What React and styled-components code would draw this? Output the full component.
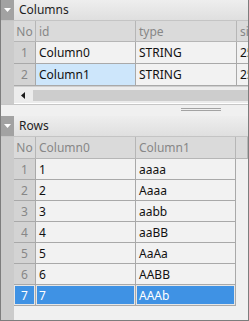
import React from "react";
import styled, { createGlobalStyle } from "styled-components";

const Global = createGlobalStyle`
  html, body { margin: 0; padding: 0; background: #f0f0f0; }
  body { font-family: "Segoe UI", "Noto Sans", "Liberation Sans", sans-serif; font-size: 12px; }
`;

const Frame = styled.div`
  width: 249px;
  height: 321px;
  box-sizing: border-box;
  border: 1px solid #7d7d7d;
  border-top: none;
  background: #f0f0f0;
  display: flex;
  flex-direction: column;
  overflow: hidden;
`;

const Panel = styled.section`
  display: flex;
  flex-direction: column;
  flex: ${(p) => (p.$grow ? "1 1 auto" : "0 0 auto")};
  min-height: 0;
`;

const TitleBar = styled.div`
  display: flex;
  height: 21px;
  box-sizing: border-box;
  border-bottom: 1px solid #c4c4c4;
  background: linear-gradient(#eeeeee, #dfdfdf);
  flex: none;
`;

const Toggle = styled.div`
  width: 13px;
  background: #a2a2a2;
  display: flex;
  align-items: center;
  justify-content: center;
  flex: none;
`;

const Title = styled.div`
  padding-left: 5px;
  line-height: 20px;
  color: #1e1e1e;
`;

const Body = styled.div`
  display: flex;
  flex: 1 1 auto;
  min-height: 0;
`;

const Gutter = styled.div`
  width: 13px;
  flex: none;
  background: #cbcbcb;
`;

const TableArea = styled.div`
  flex: 1 1 auto;
  min-width: 0;
  display: flex;
  flex-direction: column;
  overflow: hidden;
`;

const Grid = styled.div`
  display: grid;
  grid-template-columns: ${(p) => p.$cols};
  grid-template-rows: ${(p) => p.$head}px;
  grid-auto-rows: ${(p) => p.$row}px;
  width: max-content;
`;

const Row = styled.div`
  display: contents;
`;

const Cell = styled.div`
  box-sizing: border-box;
  border-right: 1px solid ${(p) => (p.$head ? "#b6b6b6" : "#a9a9a9")};
  border-bottom: 1px solid ${(p) => (p.$head ? "#b6b6b6" : "#a9a9a9")};
  background: ${(p) =>
    p.$sel ? "#3f92e4" : p.$soft ? "#cde6fb" : p.$head ? "#dadada" : p.$num ? "#d3d3d3" : "#f2f2f2"};
  color: ${(p) => (p.$sel ? "#ffffff" : p.$head || p.$num ? "#878787" : "#111111")};
  padding: 0 ${(p) => (p.$num ? "0" : "3px")};
  display: flex;
  align-items: center;
  justify-content: ${(p) => (p.$num ? "center" : "flex-start")};
  white-space: nowrap;
  overflow: hidden;
  ${(p) => (p.$sel ? "box-shadow: inset 0 0 0 1px #e6e6e6;" : "")}
`;

const HScroll = styled.div`
  display: flex;
  align-items: center;
  height: 18px;
  box-sizing: border-box;
  border-top: 1px solid #cfcfcf;
  border-bottom: 1px solid #ffffff;
  background: #ececec;
  flex: none;
`;

const ArrowBtn = styled.div`
  width: 18px;
  display: flex;
  align-items: center;
  justify-content: center;
  flex: none;
`;

const Thumb = styled.div`
  flex: 1 1 auto;
  height: 11px;
  margin-left: 1px;
  background: #cdcdcd;
`;

const Splitter = styled.div`
  height: 12px;
  flex: none;
  box-sizing: border-box;
  border-top: 1px solid #c6c6c6;
  display: flex;
  justify-content: flex-end;
  padding-right: 27px;
  padding-top: 3px;
`;

const Grip = styled.div`
  width: 40px;
  height: 3px;
  border-top: 1px solid #a3a3a3;
  border-bottom: 1px solid #a3a3a3;
  box-sizing: border-box;
`;

const Triangle = () => (
  <svg width="7" height="4" viewBox="0 0 7 4">
    <path d="M0 0 H7 L3.5 4 Z" fill="#ffffff" />
  </svg>
);

const LeftArrow = () => (
  <svg width="4" height="7" viewBox="0 0 4 7">
    <path d="M4 0 V7 L0 3.5 Z" fill="#1a1a1a" />
  </svg>
);

const columnsData = [
  { id: "Column0", type: "STRING", size: "255" },
  { id: "Column1", type: "STRING", size: "255", soft: true },
];

const rowsData = [
  ["1", "aaaa"],
  ["2", "Aaaa"],
  ["3", "aabb"],
  ["4", "aaBB"],
  ["5", "AaAa"],
  ["6", "AABB"],
  ["7", "AAAb"],
];

export default function App() {
  return (
    <>
      <Global />
      <Frame>
        <Panel>
          <TitleBar>
            <Toggle><Triangle /></Toggle>
            <Title>Columns</Title>
          </TitleBar>
          <Body>
            <Gutter />
            <TableArea>
              <Grid $cols="22px 100px 101px 60px" $head={21} $row={22}>
                <Row>
                  <Cell $head $num>No</Cell>
                  <Cell $head>id</Cell>
                  <Cell $head>type</Cell>
                  <Cell $head>size</Cell>
                </Row>
                {columnsData.map((c, i) => (
                  <Row key={c.id}>
                    <Cell $num>{i + 1}</Cell>
                    <Cell $soft={c.soft}>{c.id}</Cell>
                    <Cell>{c.type}</Cell>
                    <Cell>{c.size}</Cell>
                  </Row>
                ))}
              </Grid>
              <HScroll>
                <ArrowBtn><LeftArrow /></ArrowBtn>
                <Thumb />
              </HScroll>
            </TableArea>
          </Body>
        </Panel>
        <Splitter><Grip /></Splitter>
        <Panel $grow>
          <TitleBar>
            <Toggle><Triangle /></Toggle>
            <Title>Rows</Title>
          </TitleBar>
          <Body>
            <Gutter />
            <TableArea>
              <Grid $cols="22px 100px 100px 12px" $head={22} $row={21}>
                <Row>
                  <Cell $head $num>No</Cell>
                  <Cell $head>Column0</Cell>
                  <Cell $head>Column1</Cell>
                  <Cell $head />
                </Row>
                {rowsData.map((r, i) => {
                  const sel = i === rowsData.length - 1;
                  return (
                    <Row key={i}>
                      <Cell $num $sel={sel}>{i + 1}</Cell>
                      <Cell $sel={sel}>{r[0]}</Cell>
                      <Cell $sel={sel}>{r[1]}</Cell>
                      <div />
                    </Row>
                  );
                })}
              </Grid>
            </TableArea>
          </Body>
        </Panel>
      </Frame>
    </>
  );
}
